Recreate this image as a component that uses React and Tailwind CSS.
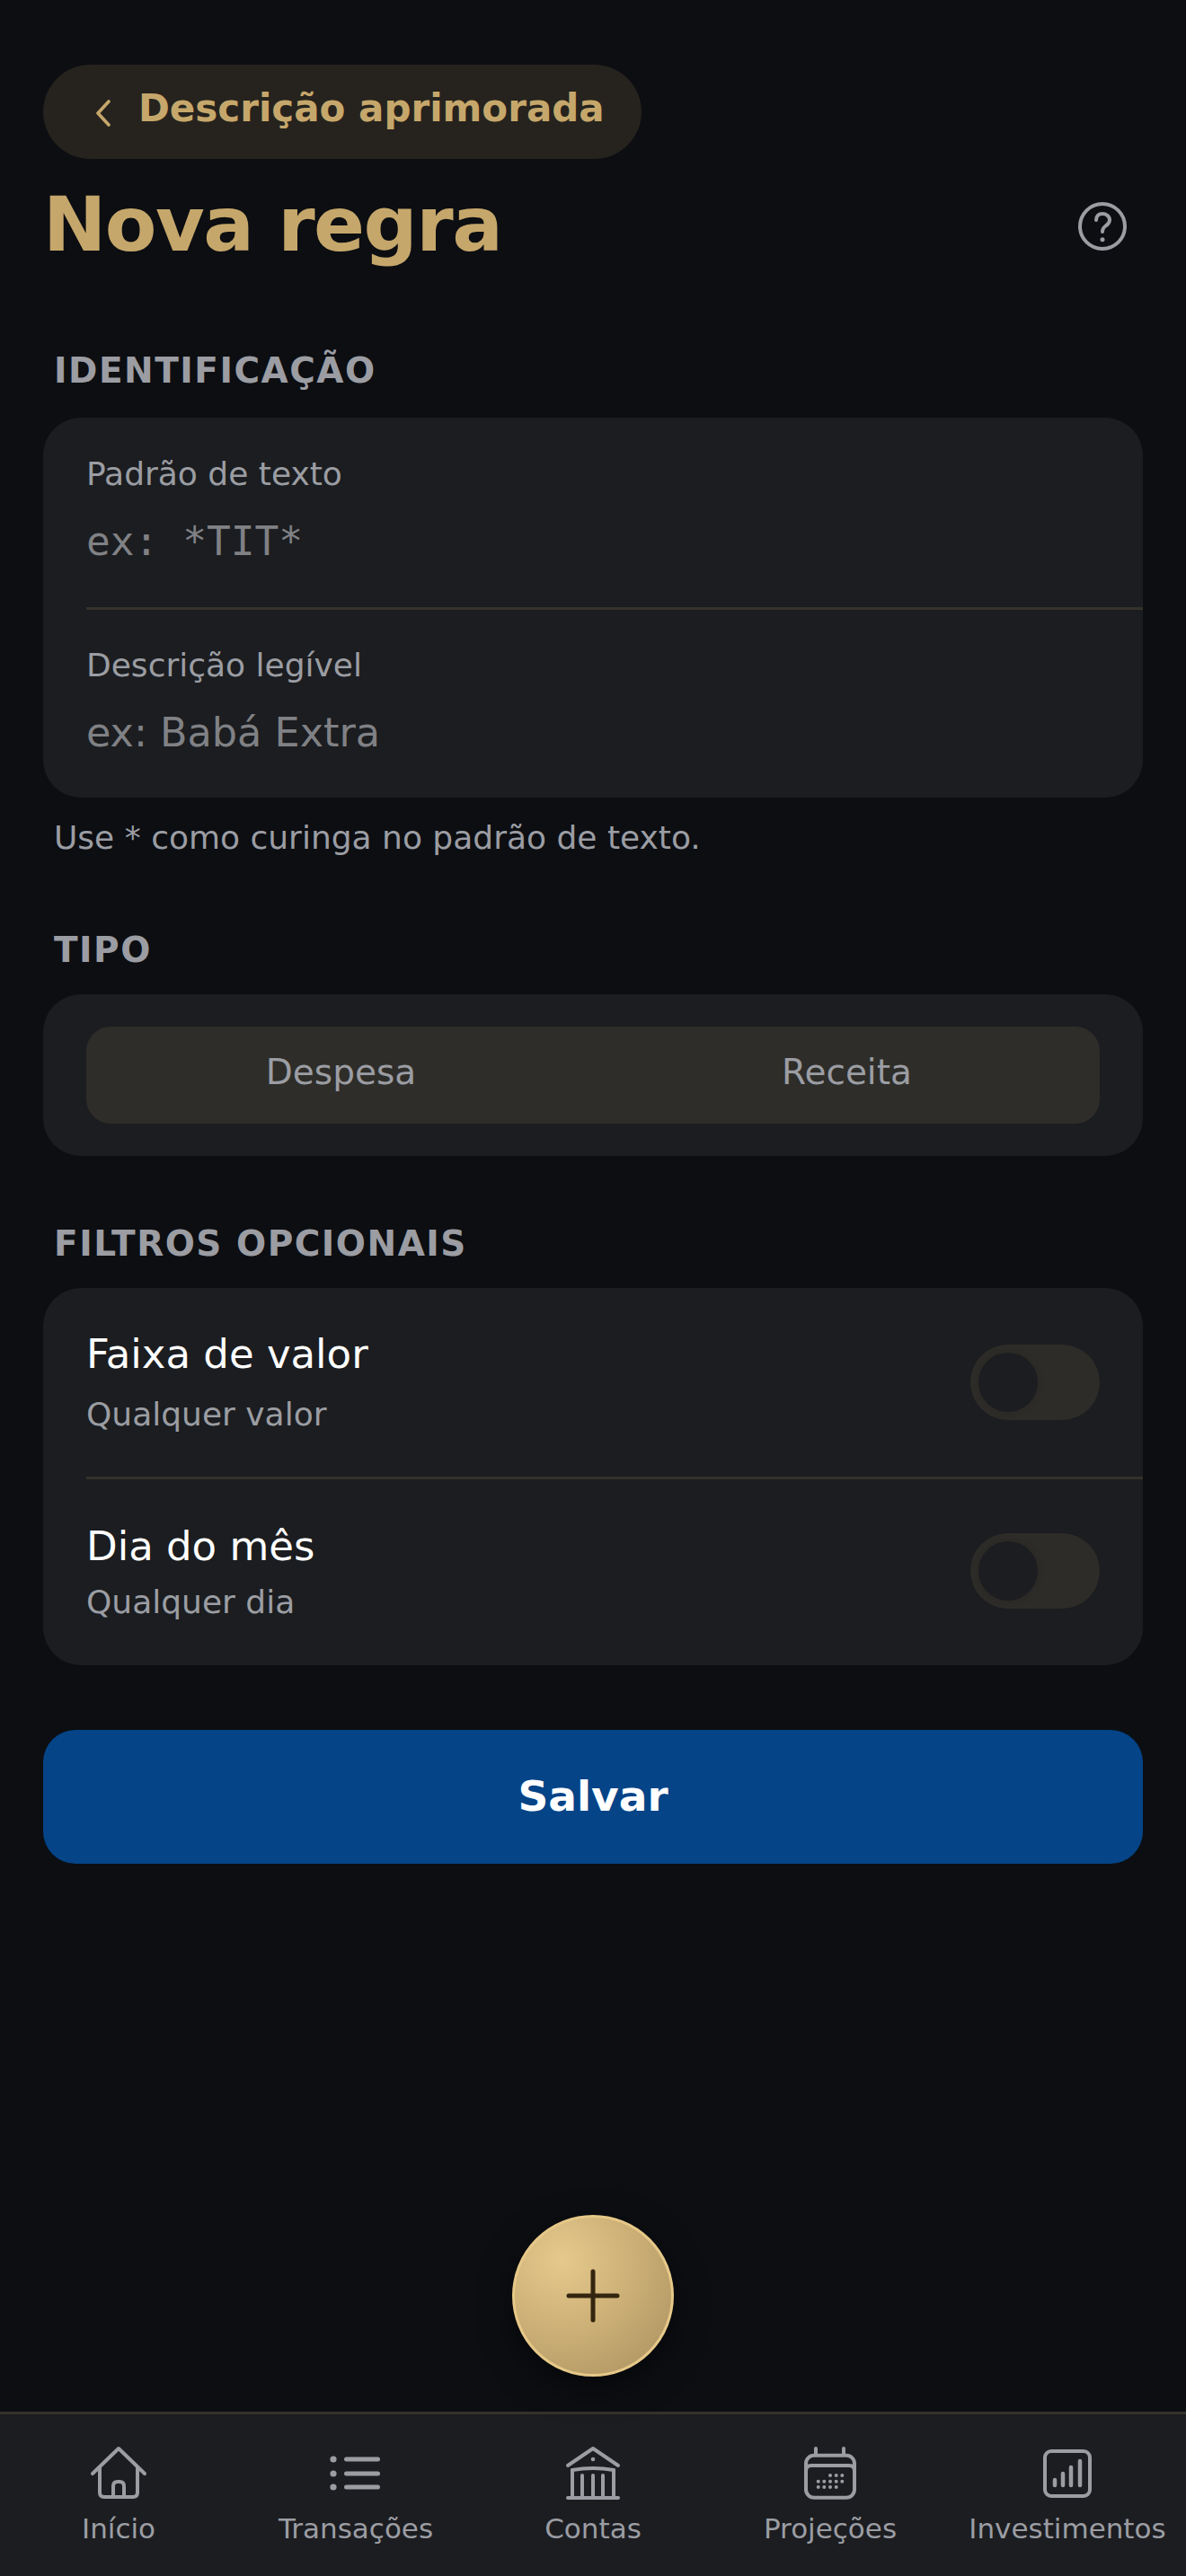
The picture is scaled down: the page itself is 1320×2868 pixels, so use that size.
import React from "react";

const font = { fontFamily: '"DejaVu Sans", sans-serif' };

function SectionLabel({ children, className = "" }) {
  return (
    <div className={`pl-3 text-[39px] leading-[48px] font-bold tracking-[1.5px] text-[#9b9da3] ${className}`}>
      {children}
    </div>
  );
}

function Toggle() {
  return (
    <div className="flex h-[84px] w-[144px] shrink-0 items-center rounded-full bg-[#2e2c28] pl-[9px]">
      <div className="h-[66px] w-[66px] rounded-full bg-[#1c1d21] shadow-[0_0_9px_rgba(0,0,0,0.12)]" />
    </div>
  );
}

function House() {
  return (
    <svg width="64" height="62" viewBox="0 0 64 62" fill="none" stroke="#9b9da3" strokeWidth="4" strokeLinecap="round" strokeLinejoin="round">
      <path d="M3 31 L32 3 L61 31" />
      <path d="M11 24 V52 Q11 57 16 57 H48 Q53 57 53 52 V24" />
      <path d="M26 57 V45 Q26 40 31 40 H33 Q38 40 38 45 V57" />
    </svg>
  );
}

function ListIcon() {
  return (
    <svg width="62" height="62" viewBox="0 0 62 62" fill="#9b9da3">
      <circle cx="6" cy="15" r="3.600" />
      <circle cx="6" cy="31" r="3.600" />
      <circle cx="6" cy="46" r="3.600" />
      <rect x="18" y="12.500" width="40" height="5" rx="2.500" />
      <rect x="18" y="28.500" width="40" height="5" rx="2.500" />
      <rect x="18" y="43.500" width="40" height="5" rx="2.500" />
    </svg>
  );
}

function Bank() {
  return (
    <svg width="62" height="62" viewBox="0 0 62 62" fill="none" stroke="#9b9da3" strokeWidth="4" strokeLinecap="round" strokeLinejoin="round">
      <path d="M3 22 L31 3 L59 22" />
      <path d="M8 27 Q31 23 54 27" />
      <path d="M8 27 V57 M54 27 V57 M19 33 V57 M31 33 V57 M42 33 V57" />
      <path d="M3 58 H59" />
      <circle cx="31" cy="15" r="2.300" fill="#9b9da3" stroke="none" />
    </svg>
  );
}

function Calendar() {
  const dots = [
    [31, 33], [37.700, 33], [44.300, 33],
    [17.700, 39.700], [24.300, 39.700], [31, 39.700], [37.700, 39.700], [44.300, 39.700],
    [17.700, 46], [24.300, 46], [31, 46], [37.700, 46],
  ];
  return (
    <svg width="62" height="62" viewBox="0 0 62 62" fill="none" stroke="#9b9da3" strokeWidth="4" strokeLinecap="round">
      <rect x="4" y="10.700" width="54" height="47" rx="9" />
      <path d="M4 28 Q4 22 10 22 H52 Q58 22 58 28" />
      <path d="M15 3 V10 M46 3 V10" />
      {dots.map(([x, y]) => (
        <circle key={`${x}-${y}`} cx={x} cy={y} r="2" fill="#9b9da3" stroke="none" />
      ))}
    </svg>
  );
}

function Chart() {
  return (
    <svg width="58" height="62" viewBox="0 0 58 62" fill="none" stroke="#9b9da3" strokeLinecap="round">
      <rect x="4" y="6" width="50" height="50" rx="7" strokeWidth="4" />
      <path d="M15 38 V44 M24 31 V44 M33 24 V44 M43 17 V44" strokeWidth="4.500" />
    </svg>
  );
}

function Help() {
  return (
    <svg width="54" height="54" viewBox="0 0 54 54" fill="none" stroke="#9b9da3" strokeWidth="4" strokeLinecap="round" strokeLinejoin="round">
      <circle cx="27" cy="27" r="25" />
      <path d="M20 20 C20 15.500 23 13 27 13 C31 13 35 15.500 35 20 C35 24 32 25.500 30 27 C28 28.500 27 30 27 33" />
      <circle cx="27" cy="41.700" r="2.500" fill="#9b9da3" stroke="none" />
    </svg>
  );
}

const tabs = [
  ["Início", House],
  ["Transações", ListIcon],
  ["Contas", Bank],
  ["Projeções", Calendar],
  ["Investimentos", Chart],
];

export default function App() {
  return (
    <div style={font} className="relative flex min-h-[2868px] flex-col bg-[#0c0e12]">
      <main className="flex flex-1 flex-col px-12 pt-[72px]">
        <div className="flex h-[105px] w-[666px] items-center rounded-full bg-[#26231e] pl-[58px]">
          <svg className="mt-[3px]" width="18" height="30" viewBox="0 0 18 30" fill="none" stroke="#c6a76b" strokeWidth="3.600" strokeLinecap="round" strokeLinejoin="round">
            <path d="M15 2 L3 15 L15 28" />
          </svg>
          <span className="ml-[30px] pb-[7px] text-[42px] font-bold leading-[50px] text-[#c6a76b]">Descrição aprimorada</span>
        </div>
        <div className="mt-[22px] flex items-center justify-between">
          <h1 className="text-[84px] font-bold leading-[102px] tracking-[-1.5px] text-[#c6a76b]">Nova regra</h1>
          <div className="mr-[18px] mt-[4px]">
            <Help />
          </div>
        </div>

        <SectionLabel className="mt-[88px]">IDENTIFICAÇÃO</SectionLabel>
        <section className="mt-[28px] rounded-[42px] bg-[#1b1d20] pl-12">
          <div className="h-[211px] pt-[41px]">
            <div className="text-[36px] leading-[44px] text-[#9b9da3]">Padrão de texto</div>
            <div style={{ fontFamily: '"DejaVu Sans Mono", monospace' }} className="mt-[27px] whitespace-pre text-[44.500px] leading-[52px] text-[#808185]">ex: *TIT*</div>
          </div>
          <div className="h-[3px] bg-[#35322b]" />
          <div className="h-[209px] pt-[40px]">
            <div className="text-[36px] leading-[44px] text-[#9b9da3]">Descrição legível</div>
            <div className="mt-[27px] text-[44.500px] leading-[52px] text-[#808185]">ex: Babá Extra</div>
          </div>
        </section>
        <p className="mt-[23px] pl-3 text-[36px] leading-[44px] text-[#9b9da3]">Use * como curinga no padrão de texto.</p>

        <SectionLabel className="mt-[79px]">TIPO</SectionLabel>
        <section className="mt-[25px] rounded-[42px] bg-[#1b1d20] px-12 py-9">
          <div className="flex h-[108px] items-center rounded-[27px] bg-[#2e2d29] pb-[6px] text-[39px] text-[#9b9da3]">
            <div className="flex-1 pl-[2px] text-center">Despesa</div>
            <div className="flex-1 text-center">Receita</div>
          </div>
        </section>

        <SectionLabel className="mt-[74px]">FILTROS OPCIONAIS</SectionLabel>
        <section className="mt-[25px] rounded-[42px] bg-[#1b1d20] pl-12">
          <div className="flex h-[210px] items-center justify-between pr-12">
            <div>
              <div className="text-[45px] leading-[52px] text-white">Faixa de valor</div>
              <div className="mt-[19px] text-[36px] leading-[44px] text-[#9b9da3]">Qualquer valor</div>
            </div>
            <Toggle />
          </div>
          <div className="h-[3px] bg-[#35322b]" />
          <div className="flex h-[207px] items-center justify-between pb-[3px] pr-12">
            <div className="mt-[4px]">
              <div className="text-[45px] leading-[52px] text-white">Dia do mês</div>
              <div className="mt-[14px] text-[36px] leading-[44px] text-[#9b9da3]">Qualquer dia</div>
            </div>
            <Toggle />
          </div>
        </section>

        <button className="mt-[72px] flex h-[149px] items-center justify-center rounded-[36px] bg-[#044487] text-[47px] font-bold text-white">Salvar</button>
      </main>

      <div className="absolute left-[570px] top-[2466px] flex h-[180px] w-[180px] items-center justify-center rounded-full border-[3px] border-[#e6c888] bg-[radial-gradient(circle_at_30%_27%,#e6c98c_0%,#c9ad74_50%,#a88f5f_100%)] shadow-[0_12px_36px_rgba(0,0,0,0.5)]">
        <svg width="60" height="60" viewBox="0 0 60 60" fill="none" stroke="#33250f" strokeWidth="5" strokeLinecap="round">
          <path d="M30 3 V57 M3 30 H57" />
        </svg>
      </div>

      <nav className="grid h-[183px] grid-cols-5 border-t-[3px] border-[#35322b] bg-[#1c1d21]">
        {tabs.map(([label, Icon]) => (
          <div key={label} className="flex flex-col items-center pt-[35px]">
            <div className="flex h-[62px] items-center justify-center">
              <Icon />
            </div>
            <div className="mt-[10px] whitespace-nowrap text-[31px] leading-[40px] text-[#9b9da3]">{label}</div>
          </div>
        ))}
      </nav>
    </div>
  );
}
